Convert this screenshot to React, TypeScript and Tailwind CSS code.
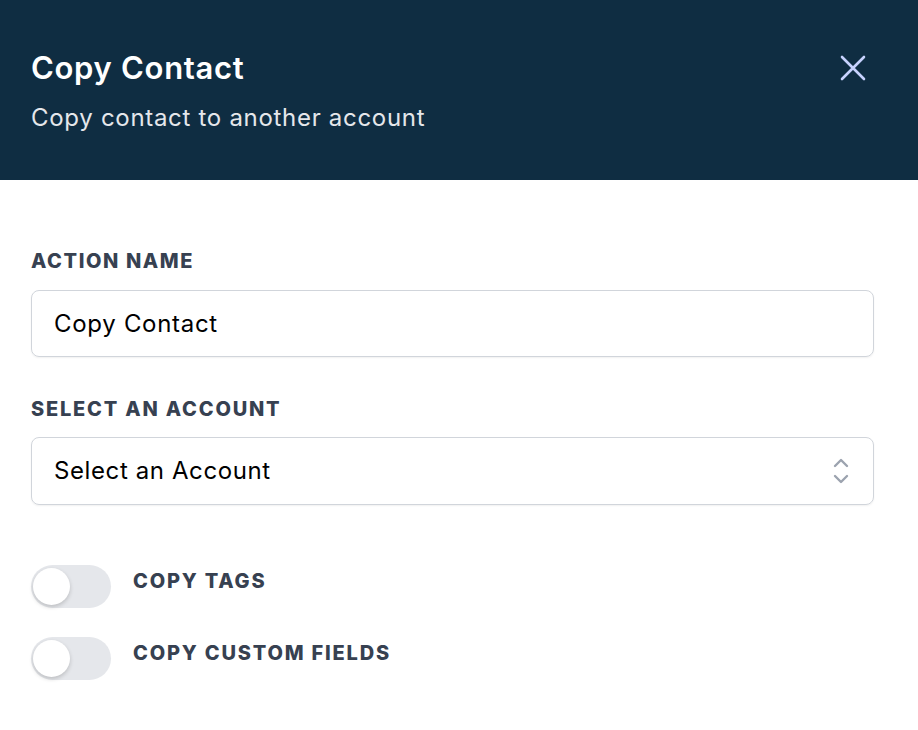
import { useState } from "react";

function Toggle({ label }: { label: string }) {
  const [on, setOn] = useState(false);
  return (
    <div className="flex items-start gap-[22px]">
      <button
        onClick={() => setOn(!on)}
        className={`relative h-[43px] w-[80px] shrink-0 rounded-full ${on ? "bg-[#0f2d42]" : "bg-[#e5e7eb]"}`}
      >
        <span
          className={`absolute top-[3px] h-[37px] w-[37px] rounded-full bg-white shadow-[0_2px_4px_rgba(0,0,0,0.18)] ${on ? "left-[40px]" : "left-[2px]"}`}
        />
      </button>
      <span className="pt-[4px] text-[20px] font-extrabold uppercase leading-[24px] tracking-[1.8px] text-[#374151]">
        {label}
      </span>
    </div>
  );
}

export default function App() {
  return (
    <div className="h-[730px] w-[918px] bg-white font-['Inter',sans-serif]">
      {/* header */}
      <div className="flex h-[180px] justify-between bg-[#0f2d42] pl-[31px] pr-[52px] pt-[50px]">
        <div>
          <h1 className="text-[31px] font-semibold leading-[36px] tracking-[0.7px] text-white">Copy Contact</h1>
          <p className="mt-[17px] text-[24px] leading-[30px] tracking-[0.7px] text-[#e5e7eb]">
            Copy contact to another account
          </p>
        </div>
        <button className="mt-[5px] h-[26px] w-[26px] text-[#c7d2fe]">
          <svg viewBox="0 0 26 26" className="h-[26px] w-[26px]" fill="none" stroke="currentColor" strokeWidth="2.6" strokeLinecap="round">
            <path d="M2 2L24 24M24 2L2 24" />
          </svg>
        </button>
      </div>

      {/* body */}
      <div className="pl-[31px] pr-[44px] pt-[69px]">
        <label className="block text-[20px] font-extrabold uppercase leading-[24px] tracking-[1.6px] text-[#374151]">
          Action Name
        </label>
        <input
          defaultValue="Copy Contact"
          className="mt-[17px] block h-[67px] w-full rounded-[8px] border border-[#d1d5db] px-[22px] text-[24px] tracking-[0.7px] text-black shadow-[0_1px_2px_rgba(0,0,0,0.06)] outline-none"
        />

        <label className="mt-[40px] block text-[20px] font-extrabold uppercase leading-[24px] tracking-[1.8px] text-[#374151]">
          Select an Account
        </label>
        <div className="mt-[16px] flex h-[68px] w-full items-center justify-between rounded-[8px] border border-[#d1d5db] pl-[22px] pr-[24px] shadow-[0_1px_2px_rgba(0,0,0,0.06)]">
          <span className="text-[24px] tracking-[0.6px] text-black">Select an Account</span>
          <svg viewBox="0 0 16 26" className="h-[26px] w-[16px]" fill="none" stroke="#9ca3af" strokeWidth="2.4" strokeLinecap="round" strokeLinejoin="round">
            <path d="M2 8L8 2L14 8M2 18L8 24L14 18" />
          </svg>
        </div>

        <div className="mt-[60px] flex flex-col gap-[29px]">
          <Toggle label="Copy Tags" />
          <Toggle label="Copy Custom Fields" />
        </div>
      </div>
    </div>
  );
}
